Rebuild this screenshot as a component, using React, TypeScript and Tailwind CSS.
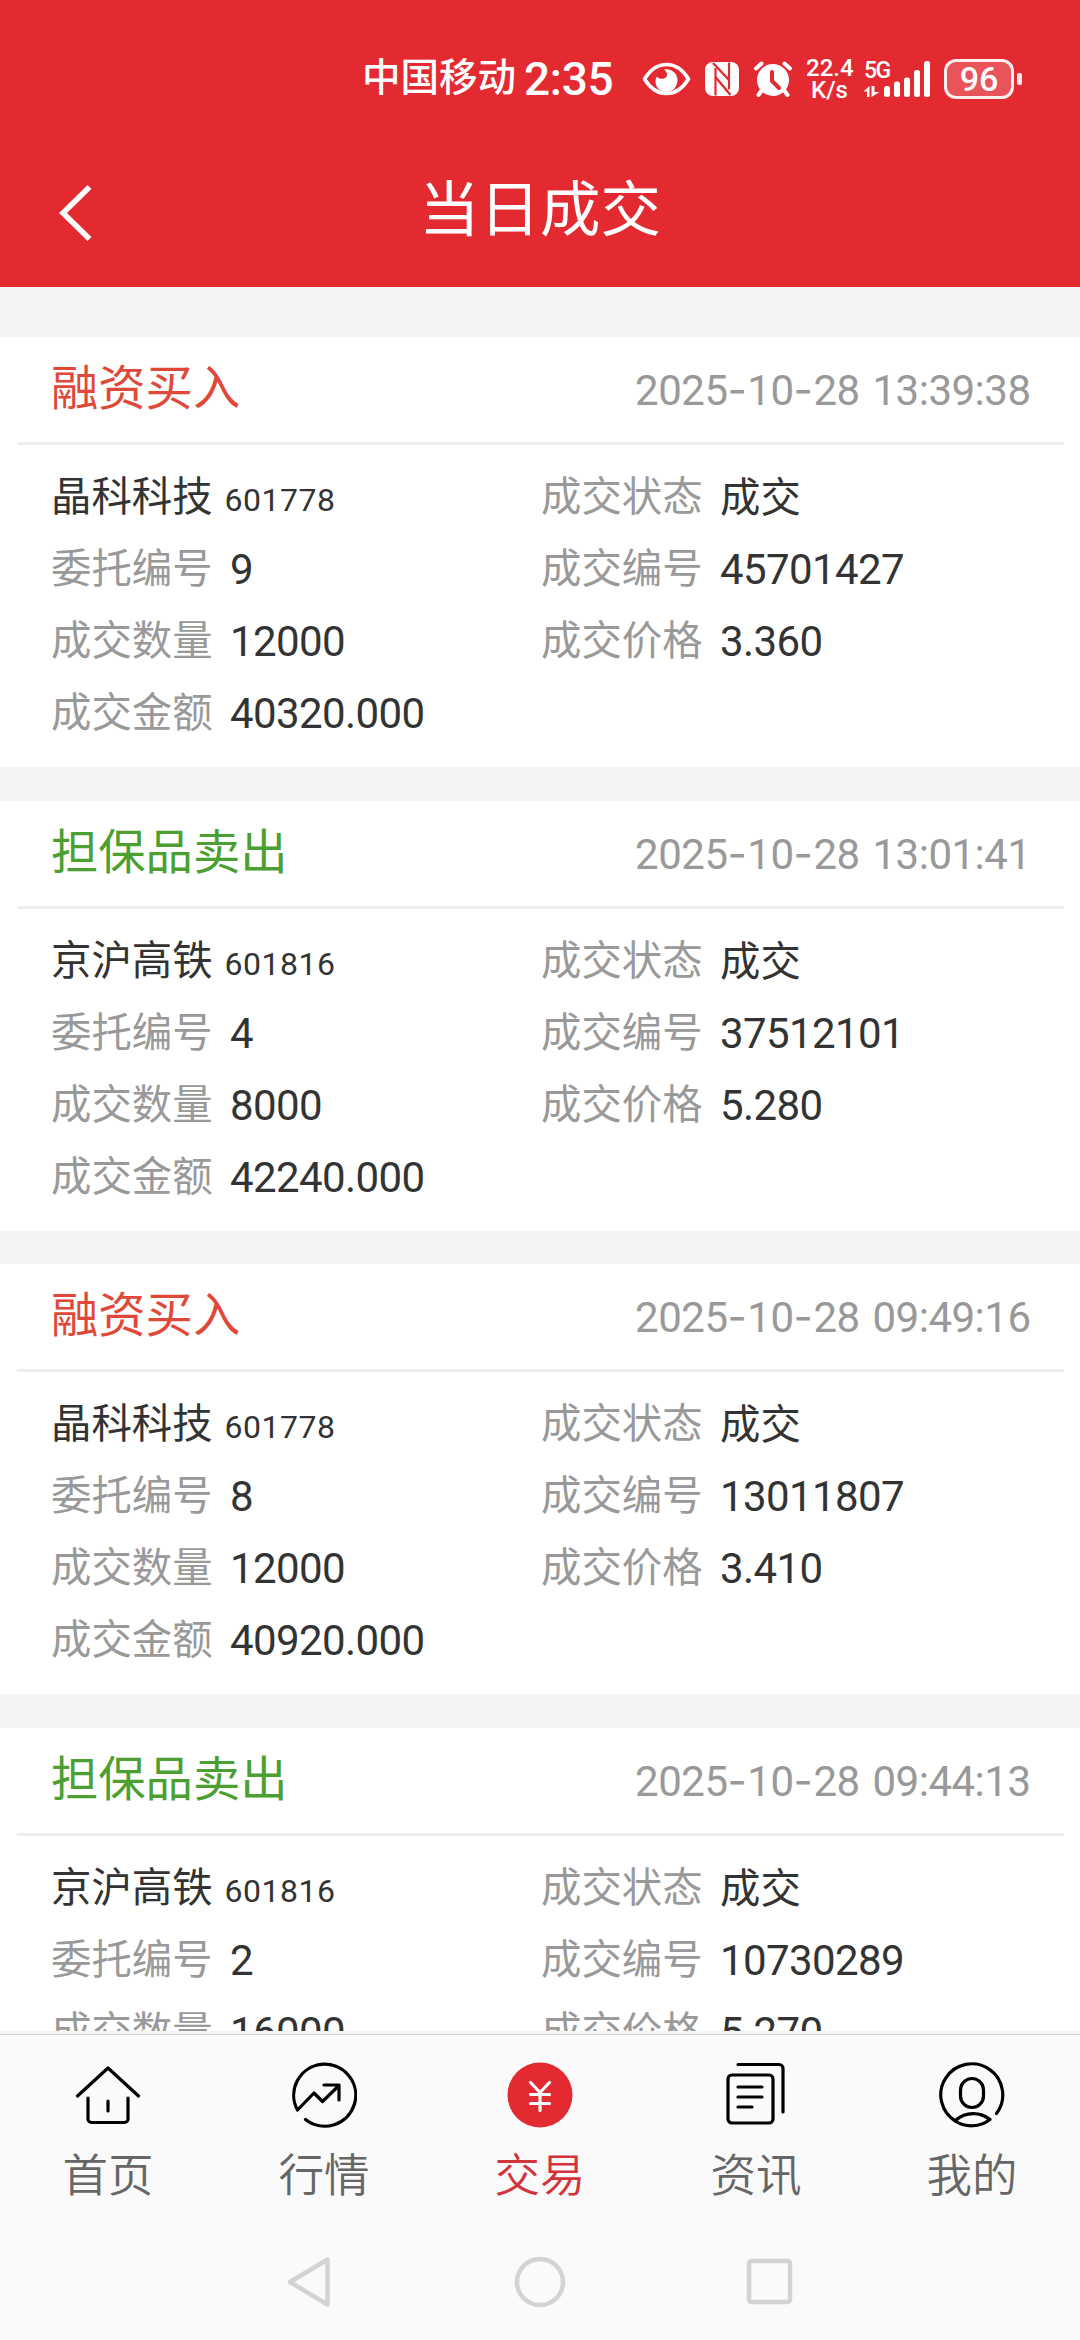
import type { ReactNode } from "react";

type Deal = {
  side: "buy" | "sell";
  time: string;
  name: string;
  code: string;
  orderNo: string;
  dealNo: string;
  amount: string;
  price: string;
  total: string;
};

const deals: Deal[] = [
  {
    side: "buy",
    time: "2025-10-28 13:39:38",
    name: "晶科科技",
    code: "601778",
    orderNo: "9",
    dealNo: "45701427",
    amount: "12000",
    price: "3.360",
    total: "40320.000",
  },
  {
    side: "sell",
    time: "2025-10-28 13:01:41",
    name: "京沪高铁",
    code: "601816",
    orderNo: "4",
    dealNo: "37512101",
    amount: "8000",
    price: "5.280",
    total: "42240.000",
  },
  {
    side: "buy",
    time: "2025-10-28 09:49:16",
    name: "晶科科技",
    code: "601778",
    orderNo: "8",
    dealNo: "13011807",
    amount: "12000",
    price: "3.410",
    total: "40920.000",
  },
  {
    side: "sell",
    time: "2025-10-28 09:44:13",
    name: "京沪高铁",
    code: "601816",
    orderNo: "2",
    dealNo: "10730289",
    amount: "16000",
    price: "5.270",
    total: "84320.000",
  },
];

function EyeIcon() {
  return (
    <svg className="ml-[32px] h-[34px] w-[49px]" viewBox="0 0 49 34" fill="none">
      <path
        d="M2.5 17C8 8 16 2.500 24.500 2.500S41 8 46.500 17C41 26 33 31.500 24.500 31.500S8 26 2.500 17Z"
        stroke="white"
        strokeWidth="3.600"
        strokeLinejoin="round"
      />
      <path
        d="M22 7.500c6-1.500 13.500 3 13.500 10.500 0 7-5 12-11 12s-11-4.500-11-10.500c0-2 .5-3.500 1.500-5 2 3.500 9 3 10-1 .5-2.500-.8-4.500-3-6Z"
        fill="white"
      />
    </svg>
  );
}

function NfcIcon() {
  return (
    <svg className="ml-[14px] h-[34px] w-[34px]" viewBox="0 0 34 34">
      <rect width="34" height="34" rx="8" fill="white" />
      <path
        d="M10.500 33.500V6M24 .5v27"
        fill="none"
        stroke="#e42a31"
        strokeWidth="2.200"
      />
      <path
        d="M8 1l16 17M10.500 15l15 18"
        fill="none"
        stroke="#e42a31"
        strokeWidth="2.400"
      />
    </svg>
  );
}

function AlarmIcon() {
  return (
    <svg
      className="ml-[14px] h-[38px] w-[40px]"
      viewBox="0 0 40 38"
      fill="none"
      strokeLinecap="round"
    >
      <circle cx="20" cy="20" r="16" fill="white" />
      <path
        d="M3 8.500l5.500-5M37 8.500l-5.500-5M9 30l-3.500 5M31 30l3.500 5"
        stroke="white"
        strokeWidth="4"
      />
      <path d="M19 12v9l7 7" stroke="#e42a31" strokeWidth="4" />
    </svg>
  );
}

function SignalIcon() {
  return (
    <div className="relative ml-[10px] h-[38px] w-[67px]">
      <svg className="h-[38px] w-[67px]" viewBox="0 0 67 38" fill="white">
        <path d="M0.500 31.500l6-5.500v11H4v-5.500ZM8.500 26H11.500v6h5l-8 5Z" />
        <rect x="21" y="26" width="6" height="11" rx="2.500" />
        <rect x="31" y="21.500" width="6" height="15.500" rx="2.500" />
        <rect x="41" y="17.500" width="6" height="19.500" rx="2.500" />
        <rect x="51" y="10" width="6" height="27" rx="2.500" />
        <rect x="61" y="1" width="6" height="36" rx="2.500" />
      </svg>
      <span className="absolute top-0 left-px text-[23px] leading-[22px] font-medium tracking-[-1.500px]">
        5G
      </span>
    </div>
  );
}

function StatusBar() {
  return (
    <div className="flex h-[129px] items-center pt-[28px] pl-[362px]">
      <span className="w-[156px] text-[38.500px] leading-none font-medium">中国移动</span>
      <span className="ml-[6px] w-[86px] text-[46px] leading-none font-medium tracking-[-0.300px]">
        2:35
      </span>
      <EyeIcon />
      <NfcIcon />
      <AlarmIcon />
      <div className="ml-[13px] flex w-[47px] flex-col text-center text-[24px] leading-[22px] font-medium">
        <span>22.4</span>
        <span>K/s</span>
      </div>
      <SignalIcon />
      <div className="ml-[14px] flex h-[40px] w-[70px] items-center justify-center rounded-[12px] border-[3px] border-white/90 bg-white/20 text-[34px] leading-none font-medium">
        96
      </div>
      <div className="ml-[3px] h-[12px] w-[5px] rounded-[2px] bg-white/90" />
    </div>
  );
}

function Stamp({ time }: { time: string }) {
  const [date, clock] = time.split(" ");
  return (
    <span className="text-[42px] tracking-[-0.500px] text-[#999999] [word-spacing:3px]">
      {date.split("-").map((part, i) => (
        <span key={i}>
          {i > 0 && <span className="font-[Inter] tracking-[0.500px]">-</span>}
          {part}
        </span>
      ))}{" "}
      {clock}
    </span>
  );
}

function Field({ label, value }: { label: string; value: ReactNode }) {
  return (
    <div className="flex h-[72px] leading-[72px]">
      <span className="w-[179px] text-[40.400px] text-[#999999]">{label}</span>
      <span className="text-[42px] tracking-[-0.600px] text-[#333333]">{value}</span>
    </div>
  );
}

function DealCard({ deal }: { deal: Deal }) {
  return (
    <section className="h-[430px] shrink-0 bg-white">
      <div className="mx-[16.500px] flex h-[108px] items-center justify-between border-b-[3px] border-[#eeeeee] pt-px pr-[33px] pl-[34.500px]">
        {deal.side === "buy" ? (
          <h2 className="text-[47.300px] leading-none text-[#e0483a]">融资买入</h2>
        ) : (
          <h2 className="text-[47.300px] leading-none text-[#4ba031]">担保品卖出</h2>
        )}
        <Stamp time={deal.time} />
      </div>
      <div className="grid grid-cols-[490px_1fr] pt-[17px] pl-[51px]">
        <div className="h-[72px] text-[40.400px] leading-[72px] text-[#333333]">
          {deal.name}
          <span className="ml-[12px] text-[32px] tracking-[0.500px]">{deal.code}</span>
        </div>
        <Field label="成交状态" value={<span className="text-[40.400px] tracking-normal">成交</span>} />
        <Field label="委托编号" value={deal.orderNo} />
        <Field label="成交编号" value={deal.dealNo} />
        <Field label="成交数量" value={deal.amount} />
        <Field label="成交价格" value={deal.price} />
        <Field label="成交金额" value={deal.total} />
      </div>
    </section>
  );
}

function TabIcon({ children }: { children: ReactNode }) {
  return (
    <svg
      className="h-[66px] w-[66px]"
      viewBox="0 0 66 66"
      fill="none"
      stroke="black"
      strokeWidth="3.200"
      strokeLinecap="round"
      strokeLinejoin="round"
    >
      {children}
    </svg>
  );
}

const tabs = [
  {
    label: "首页",
    icon: (
      <TabIcon>
        <path d="M2.500 34L33 6l30.500 28" />
        <path d="M13 36v21a3.500 3.500 0 0 0 3.500 3.500h33A3.500 3.500 0 0 0 53 57V36M33 39v10" />
      </TabIcon>
    ),
  },
  {
    label: "行情",
    icon: (
      <TabIcon>
        <path d="M14.500 57.500A31 31 0 1 0 6.500 48L23 31l8.500 8.500L48 23.500M33 23h15v15" />
      </TabIcon>
    ),
  },
  {
    label: "交易",
    active: true,
    icon: (
      <TabIcon>
        <circle cx="33" cy="33" r="32.500" fill="#e42a31" stroke="none" />
        <path d="M23.500 20.500L33 30.500l9.500-10M33 30.500v18M23.500 32.500h19M23.500 41.500h19" stroke="white" />
      </TabIcon>
    ),
  },
  {
    label: "资讯",
    icon: (
      <TabIcon>
        <rect x="5" y="13" width="45" height="48" rx="4" />
        <path d="M15 2.500h41a4 4 0 0 1 4 4V50M15 25h24M15 35h24M15 45h14" />
      </TabIcon>
    ),
  },
  {
    label: "我的",
    icon: (
      <TabIcon>
        <path d="M57.500 51.500A31 31 0 1 0 17 59.500c9.500 6 24 6 34-2-9.500-8-24.500-8-34 .5" />
        <rect x="21.500" y="16.500" width="23" height="29" rx="11.500" />
      </TabIcon>
    ),
  },
];

function TabBar() {
  return (
    <nav className="grid grid-cols-5 border-t border-[#d2d2d2] pt-[27px]">
      {tabs.map((tab) => (
        <div key={tab.label} className="flex flex-col items-center">
          {tab.icon}
          <span
            className={
              tab.active
                ? "mt-[21px] text-[45.500px] leading-[56px] font-[350] text-[#d3333a]"
                : "mt-[21px] text-[45.500px] leading-[56px] font-[350] text-[#666666]"
            }
          >
            {tab.label}
          </span>
        </div>
      ))}
    </nav>
  );
}

function SystemNav() {
  return (
    <div className="mt-[51px] flex justify-center gap-[178px]">
      <svg className="h-[52px] w-[52px]" viewBox="0 0 52 52" fill="none" stroke="#d3d3d3" strokeWidth="4.500" strokeLinejoin="round">
        <path d="M43.500 3.500v45L6 26Z" />
      </svg>
      <svg className="h-[52px] w-[52px]" viewBox="0 0 52 52" fill="none" stroke="#d3d3d3" strokeWidth="4.500">
        <circle cx="26" cy="26" r="23" />
      </svg>
      <svg className="h-[52px] w-[52px]" viewBox="0 0 52 52" fill="none" stroke="#d3d3d3" strokeWidth="4.500">
        <rect x="5" y="5" width="41" height="41" rx="2.500" />
      </svg>
    </div>
  );
}

export default function App() {
  return (
    <div className="flex h-[2340px] w-[1080px] flex-col overflow-hidden bg-[#f4f4f4] font-[Roboto,'Noto_Sans_CJK_SC',sans-serif]">
      <header className="h-[287px] shrink-0 bg-[#e42a31] text-white">
        <StatusBar />
        <div className="grid h-[158px] grid-cols-[60px_1fr_60px] items-center">
          <svg
            className="mt-[10px] ml-[58px] h-[58px] w-[36px]"
            viewBox="0 0 36 58"
            fill="none"
            stroke="white"
            strokeWidth="5.500"
          >
            <path d="M31.500 3L5 29l26.500 26" />
          </svg>
          <h1 className="pt-[7px] text-center text-[60.500px] leading-none">当日成交</h1>
        </div>
      </header>

      <main className="flex h-[1744px] shrink-0 flex-col gap-[33.500px] overflow-hidden pt-[50px]">
        {deals.map((deal) => (
          <DealCard key={deal.dealNo} deal={deal} />
        ))}
      </main>

      <footer className="mt-[3px] h-[306px] bg-[#fafafa]">
        <TabBar />
        <SystemNav />
      </footer>
    </div>
  );
}
